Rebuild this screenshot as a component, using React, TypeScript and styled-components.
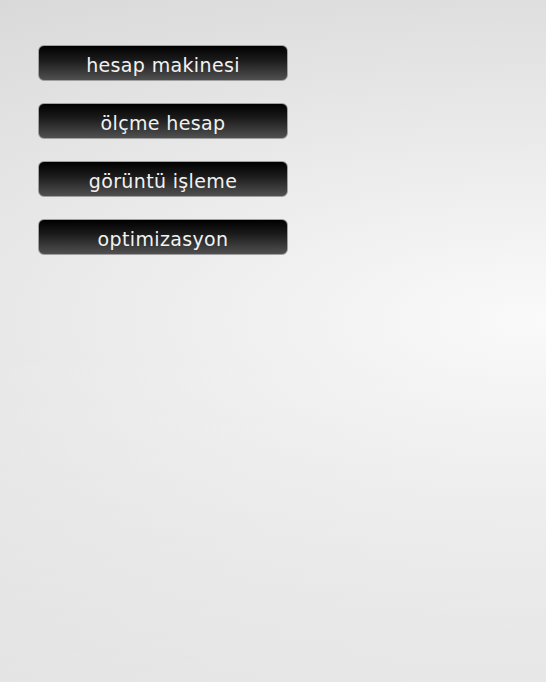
import React from "react";
import styled, { createGlobalStyle } from "styled-components";

const GlobalStyle = createGlobalStyle`
  html, body {
    margin: 0;
    padding: 0;
    height: 100%;
  }
  body {
    min-height: 682px;
    background:
      linear-gradient(to bottom, rgba(255,255,255,0) 0%, rgba(255,255,255,0) 50%, rgba(255,255,255,0.34) 100%),
      radial-gradient(ellipse 1100px 420px at 100% 47%, #fafafa 0%, #d6d6d6 100%);
    background-color: #d6d6d6;
    font-family: "DejaVu Sans", Verdana, sans-serif;
  }
`;

const Page = styled.div`
  min-height: 682px;
  box-sizing: border-box;
  padding: 45px 0 0 38px;
`;

const Menu = styled.nav`
  display: flex;
  flex-direction: column;
  gap: 22px;
  width: 250px;
`;

const MenuButton = styled.a`
  display: flex;
  align-items: center;
  justify-content: center;
  box-sizing: border-box;
  height: 36px;
  border: 1px solid #a0a0a0;
  border-radius: 6px;
  background: linear-gradient(to bottom, #000000 0%, #1a1a1a 40%, #505050 100%);
  color: #f2f2f2;
  font-family: "DejaVu Sans", Verdana, sans-serif;
  font-size: 19px;
  letter-spacing: 0.35px;
  text-decoration: none;
  padding-top: 3px;
  cursor: pointer;
`;

const items = ["hesap makinesi", "ölçme hesap", "görüntü işleme", "optimizasyon"];

export default function App() {
  return (
    <>
      <GlobalStyle />
      <Page>
        <Menu>
          {items.map((t) => (
            <MenuButton key={t}>{t}</MenuButton>
          ))}
        </Menu>
      </Page>
    </>
  );
}
